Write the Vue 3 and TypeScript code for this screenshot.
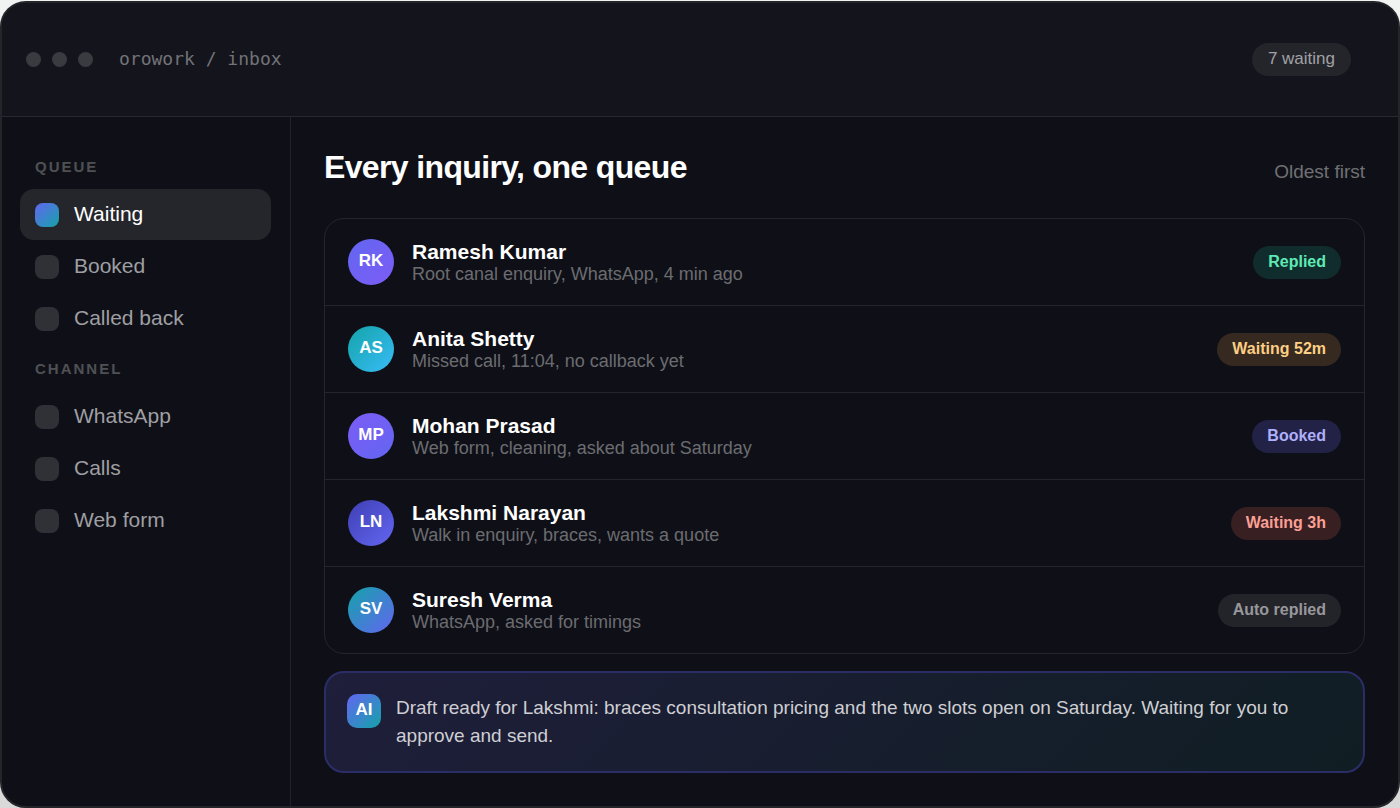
<script setup lang="ts">
interface NavItem {
  label: string
  active?: boolean
}

interface NavGroup {
  title: string
  items: NavItem[]
}

interface Inquiry {
  initials: string
  name: string
  detail: string
  status: string
  tone: string
  avatar: string
}

const groups: NavGroup[] = [
  {
    title: 'Queue',
    items: [{ label: 'Waiting', active: true }, { label: 'Booked' }, { label: 'Called back' }],
  },
  {
    title: 'Channel',
    items: [{ label: 'WhatsApp' }, { label: 'Calls' }, { label: 'Web form' }],
  },
]

const inquiries: Inquiry[] = [
  { initials: 'RK', name: 'Ramesh Kumar', detail: 'Root canal enquiry, WhatsApp, 4 min ago', status: 'Replied', tone: 'green', avatar: 'indigo-violet' },
  { initials: 'AS', name: 'Anita Shetty', detail: 'Missed call, 11:04, no callback yet', status: 'Waiting 52m', tone: 'amber', avatar: 'teal-sky' },
  { initials: 'MP', name: 'Mohan Prasad', detail: 'Web form, cleaning, asked about Saturday', status: 'Booked', tone: 'indigo', avatar: 'violet-indigo' },
  { initials: 'LN', name: 'Lakshmi Narayan', detail: 'Walk in enquiry, braces, wants a quote', status: 'Waiting 3h', tone: 'red', avatar: 'deep-indigo' },
  { initials: 'SV', name: 'Suresh Verma', detail: 'WhatsApp, asked for timings', status: 'Auto replied', tone: 'gray', avatar: 'teal-indigo' },
]
</script>

<template>
  <div class="window">
    <header class="titlebar">
      <div class="dots" aria-hidden="true"><i></i><i></i><i></i></div>
      <span class="path">orowork / inbox</span>
      <span class="count">7 waiting</span>
    </header>
    <div class="body">
      <nav class="sidebar" aria-label="Inbox">
        <section v-for="group in groups" :key="group.title" class="group">
          <h2 class="group-title">{{ group.title }}</h2>
          <a
            v-for="item in group.items"
            :key="item.label"
            href="#"
            class="nav-item"
            :class="{ active: item.active }"
            :aria-current="item.active ? 'page' : undefined"
          >
            <span class="swatch"></span>
            <span class="nav-label">{{ item.label }}</span>
          </a>
        </section>
      </nav>
      <main class="main">
        <div class="heading">
          <h1>Every inquiry, one queue</h1>
          <span class="sort">Oldest first</span>
        </div>
        <ul class="list">
          <li v-for="row in inquiries" :key="row.initials" class="row">
            <span class="avatar" :class="row.avatar">{{ row.initials }}</span>
            <div class="who">
              <span class="name">{{ row.name }}</span>
              <span class="detail">{{ row.detail }}</span>
            </div>
            <span class="badge" :class="row.tone">{{ row.status }}</span>
          </li>
        </ul>
        <aside class="draft">
          <span class="ai">AI</span>
          <p>Draft ready for Lakshmi: braces consultation pricing and the two slots open on Saturday. Waiting for you to approve and send.</p>
        </aside>
      </main>
    </div>
  </div>
</template>

<style>
body {
  background: linear-gradient(#f1f2f2, #d9d9da);
}
</style>

<style scoped>
* {
  box-sizing: border-box;
}

.window {
  display: flex;
  flex-direction: column;
  min-height: calc(100vh - 1px);
  margin-top: 1px;
  border: 2px solid #242529;
  border-radius: 26px;
  overflow: hidden;
  background: #0f1017;
  font-family: "Liberation Sans", Arial, sans-serif;
  color: #fff;
}

.titlebar {
  display: flex;
  align-items: center;
  height: 114px;
  padding: 0 47px 0 24px;
  background: #14151c;
  border-bottom: 1px solid #28292d;
}

.dots {
  display: flex;
  gap: 11px;
}

.dots i {
  width: 15px;
  height: 15px;
  border-radius: 50%;
  background: #3a3b40;
}

.path {
  margin-left: 26px;
  padding-bottom: 2px;
  font-family: "DejaVu Sans Mono", monospace;
  font-size: 18px;
  color: #727377;
}

.count {
  margin-left: auto;
  padding: 0 16px 2px;
  border-radius: 17px;
  background: #24252b;
  font-size: 17px;
  line-height: 31px;
  color: #a1a1a5;
}

.body {
  flex: 1;
  display: grid;
  grid-template-columns: 289px 1fr;
}

.sidebar {
  padding: 41px 19px 32px 18px;
  border-right: 1px solid #222329;
}

.group {
  display: flex;
  flex-direction: column;
  gap: 1px;
  margin-bottom: 16px;
}

.group-title {
  margin: 0 0 12px;
  padding-left: 15px;
  font-size: 15px;
  line-height: 18px;
  font-weight: 700;
  letter-spacing: 2px;
  text-transform: uppercase;
  color: #4f5054;
}

.nav-item {
  display: flex;
  align-items: center;
  gap: 15px;
  height: 51px;
  padding: 0 15px;
  border-radius: 14px;
  font-size: 21px;
  color: #9f9fa3;
  text-decoration: none;
}

.nav-item.active {
  background: #25262b;
  color: #fff;
}

.nav-label {
  padding-bottom: 2px;
}

.swatch {
  width: 24px;
  height: 24px;
  border-radius: 8px;
  background: #303136;
}

.active .swatch,
.ai {
  background: linear-gradient(135deg, #6366f1, #14a3a8);
}

.main {
  padding: 31px 33px;
  min-width: 0;
}

.heading {
  display: flex;
  align-items: baseline;
  justify-content: space-between;
  margin-bottom: 32px;
}

h1 {
  margin: 0;
  font-size: 32px;
  line-height: 38px;
  font-weight: 700;
  letter-spacing: -0.02em;
}

.sort {
  font-size: 19px;
  color: #6f7074;
}

.list {
  margin: 0 0 17px;
  padding: 0;
  list-style: none;
  border: 1px solid #25262b;
  border-radius: 20px;
}

.row {
  display: flex;
  align-items: center;
  gap: 18px;
  padding: 20px 23px;
}

.row + .row {
  border-top: 1px solid #25262b;
}

.avatar {
  width: 46px;
  height: 46px;
  border-radius: 50%;
  font-size: 17px;
  line-height: 44px;
  font-weight: 700;
  text-align: center;
}

.indigo-violet {
  background: linear-gradient(135deg, #6366f1, #7c5cf6);
}

.teal-sky {
  background: linear-gradient(135deg, #14a3a8, #38bdf8);
}

.violet-indigo {
  background: linear-gradient(135deg, #7c5cf6, #6366f1);
}

.deep-indigo {
  background: linear-gradient(135deg, #3f3fb4, #6366f1);
}

.teal-indigo {
  background: linear-gradient(135deg, #14a3a8, #6366f1);
}

.who {
  flex: 1;
  display: flex;
  flex-direction: column;
}

.name {
  font-size: 21px;
  line-height: 23px;
  font-weight: 700;
}

.detail {
  font-size: 18px;
  line-height: 22px;
  color: #6b6c70;
}

.badge {
  padding: 0 15px 2px;
  border-radius: 17px;
  font-size: 16px;
  line-height: 31px;
  font-weight: 700;
}

.green {
  background: #112c2c;
  color: #5eeab5;
}

.amber {
  background: #36291f;
  color: #fccf84;
}

.indigo {
  background: #222246;
  color: #aeb0fb;
}

.red {
  background: #371f22;
  color: #fb9f94;
}

.gray {
  background: #232429;
  color: #98989c;
}

.draft {
  display: flex;
  align-items: flex-start;
  gap: 15px;
  padding: 21px;
  border: 2px solid #2a2d66;
  border-radius: 20px;
  background: linear-gradient(135deg, #1f1e3b, #101e23);
}

.ai {
  flex: none;
  width: 34px;
  height: 34px;
  border-radius: 10px;
  font-size: 17px;
  line-height: 32px;
  font-weight: 700;
  text-align: center;
}

.draft p {
  margin: 0;
  font-size: 19px;
  line-height: 28px;
  color: #cfcfd3;
}
</style>
